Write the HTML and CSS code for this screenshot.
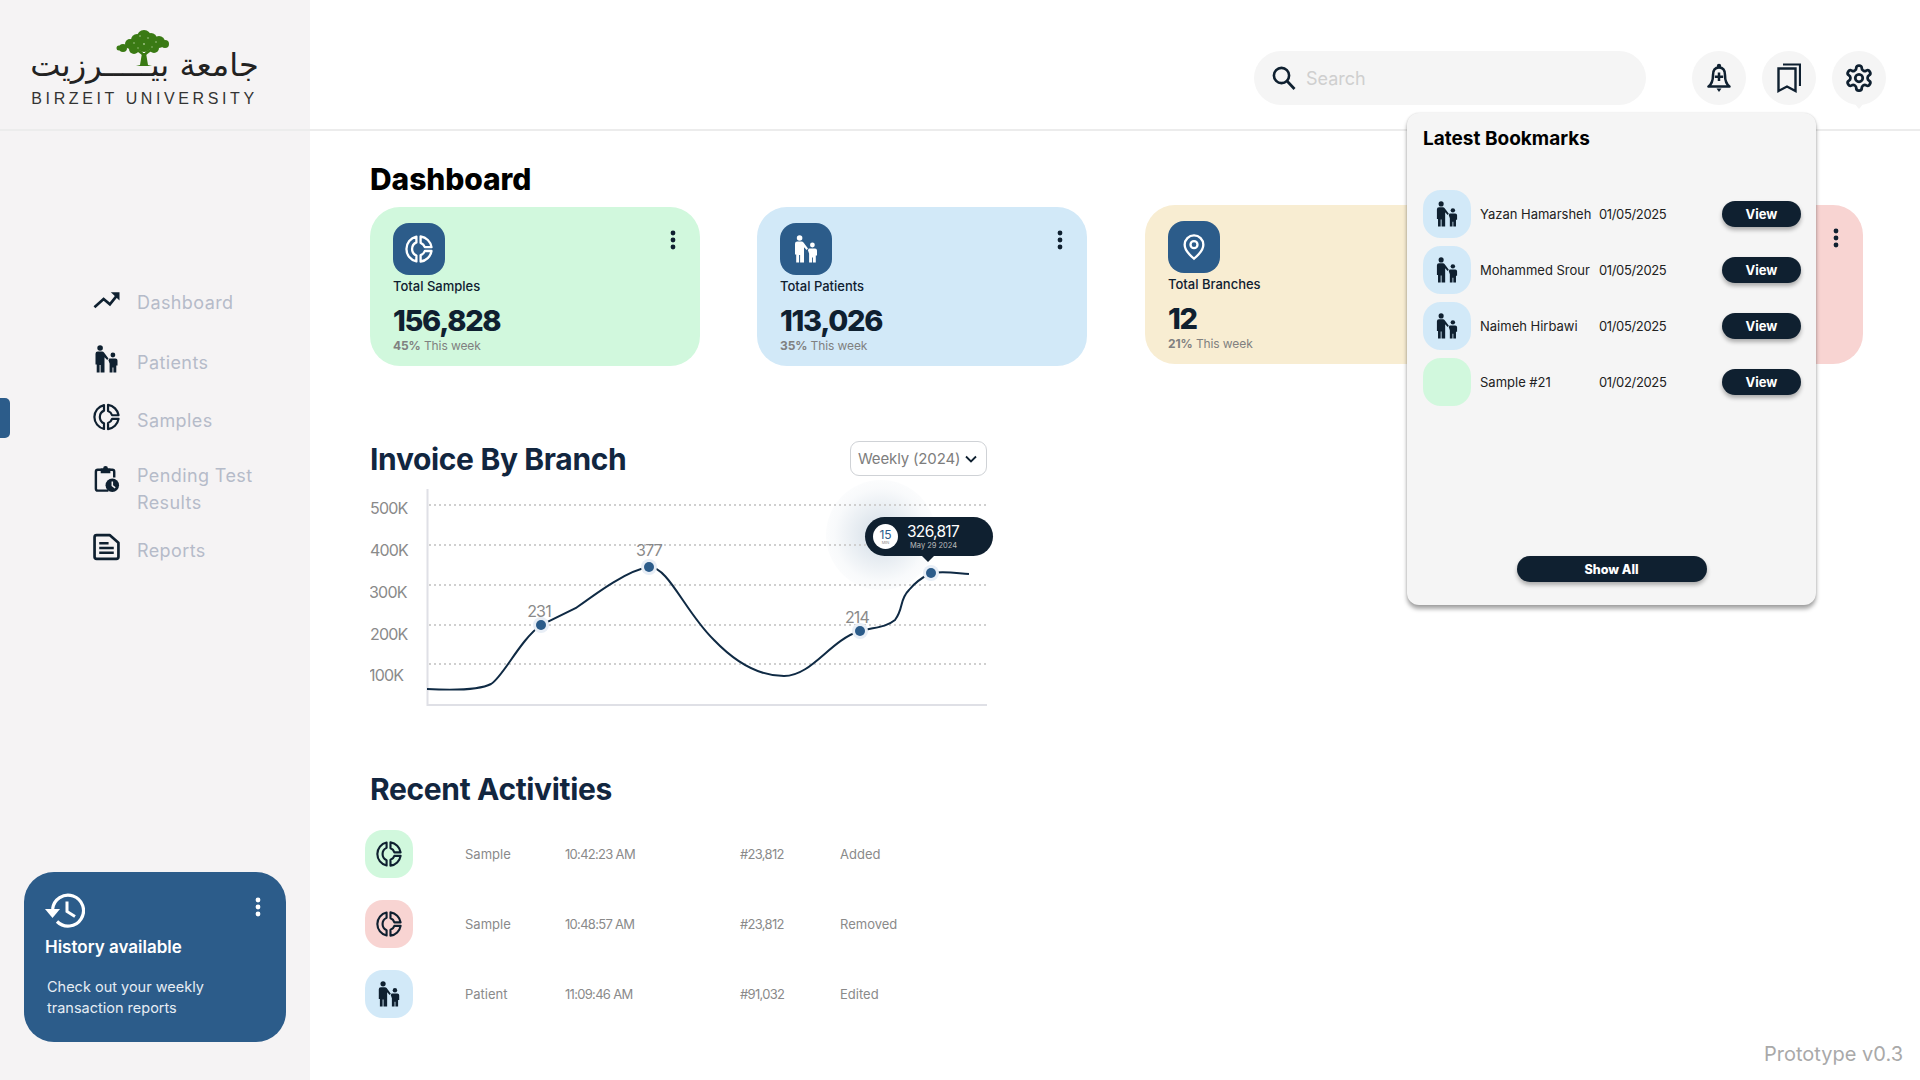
FILE: index.html
```html
<!DOCTYPE html>
<html lang="en">
<head>
<meta charset="utf-8">
<title>Birzeit University Dashboard</title>
<link rel="stylesheet" href="styles.css">
</head>
<body>
<svg class="sprite" aria-hidden="true">
  <symbol id="i-person" viewBox="0 0 24 28">
    <circle cx="5.6" cy="3" r="2.8" fill="currentColor"/>
    <circle cx="18.4" cy="10" r="2.4" fill="currentColor"/>
    <path fill="currentColor" d="M1 19.5V8.8Q1 6.6 3.2 6.6H7.6Q8.8 6.6 9.5 7.6L14 13.6L12.7 15L10 12.2V27.5H6.1V20H5.1V27.5H2.2V19.5Z"/>
    <path fill="currentColor" d="M14.8 13.4H21Q23 13.4 23 15.4V20.4H21.8V27.5H18.9V22.4H18V27.5H15.1V18.6L13.9 15.2Z"/>
  </symbol>
  <symbol id="i-sample" viewBox="0 0 28 28">
    <g fill="none" stroke="currentColor" stroke-width="2.3" stroke-linejoin="round">
      <path d="M11.4 1.6A12.7 12.7 0 0 0 11.4 26.4V20.6A7.2 7.2 0 0 1 11.4 7.4Z"/>
      <path d="M15.6 1.5A12.7 12.7 0 0 1 26.5 12.2H19.8Q18.8 9 15.6 7.8Z"/>
      <path d="M26.5 16A12.7 12.7 0 0 1 15.6 26.5V20.2Q18.8 19 19.8 16Z"/>
    </g>
  </symbol>
  <symbol id="i-dots" viewBox="0 0 6 20">
    <circle cx="3" cy="3" r="2.4" fill="currentColor"/><circle cx="3" cy="10" r="2.4" fill="currentColor"/><circle cx="3" cy="17" r="2.4" fill="currentColor"/>
  </symbol>
</svg>

<aside class="sidebar">
  <div class="logo">
    <svg class="tree" viewBox="0 0 56 38" aria-hidden="true">
      <g fill="#3a7a14">
        <path d="M24 36L26 24H30L32 36L36 37H20Z"/>
        <path d="M26 26L18 20L20 19L27 23ZM30 26L38 20L36 19L29 23Z"/>
        <circle cx="28" cy="8" r="7"/><circle cx="21" cy="11" r="6"/><circle cx="35" cy="10" r="6"/><circle cx="14" cy="15" r="5"/><circle cx="43" cy="13" r="6"/><circle cx="49" cy="15" r="4"/><circle cx="7" cy="19" r="4"/><circle cx="3" cy="19" r="2.5"/><circle cx="28" cy="16" r="7"/><circle cx="38" cy="19" r="5"/><circle cx="18" cy="20" r="5"/>
      </g>
      <g fill="#a9c98f"><circle cx="24" cy="7" r=".8"/><circle cx="32" cy="9" r=".8"/><circle cx="40" cy="13" r=".8"/><circle cx="18" cy="14" r=".8"/><circle cx="28" cy="15" r=".9"/><circle cx="36" cy="18" r=".7"/><circle cx="22" cy="19" r=".7"/></g>
    </svg>
    <div class="logo-ar" lang="ar" dir="rtl">جامعة بيـــــرزيت</div>
    <div class="logo-en">BIRZEIT UNIVERSITY</div>
  </div>

  <span class="nav-marker"></span>
  <nav class="nav">
    <a class="nav-item">
      <svg class="nav-ic" viewBox="0 0 28 18"><path d="M1.5 16.5L11 8L17.5 13.5L26 3" fill="none" stroke="currentColor" stroke-width="2.8"/><path d="M18.5 1H27.5V9.5Z" fill="currentColor"/></svg>
      <span>Dashboard</span>
    </a>
    <a class="nav-item">
      <svg class="nav-ic ic-tall"><use href="#i-person"/></svg>
      <span>Patients</span>
    </a>
    <a class="nav-item">
      <svg class="nav-ic ic-tall"><use href="#i-sample"/></svg>
      <span>Samples</span>
    </a>
    <a class="nav-item nav-two">
      <svg class="nav-ic ic-tall" viewBox="0 0 26 29">
        <path d="M15 26.5H4Q2 26.5 2 24.5V7Q2 5 4 5H19Q21 5 21 7V13" fill="none" stroke="currentColor" stroke-width="2.5"/>
        <path d="M7 3.5H9.5A2.5 2.5 0 0 1 14.5 3.5H17V8.5H7Z" fill="currentColor"/>
        <circle cx="19" cy="21" r="7" fill="currentColor"/>
        <path d="M19 17V21.4L22 23.6" fill="none" stroke="#f5f3f4" stroke-width="1.6"/>
      </svg>
      <span>Pending Test Results</span>
    </a>
    <a class="nav-item">
      <svg class="nav-ic ic-tall" viewBox="0 0 26 26">
        <path d="M3.5 1.5H16L24.5 9V22.5Q24.5 24.5 22.5 24.5H3.5Q1.5 24.5 1.5 22.5V3.5Q1.5 1.5 3.5 1.5Z" fill="none" stroke="currentColor" stroke-width="2.6" stroke-linejoin="round"/>
        <path d="M6 9.5H15M6 14H20M6 18.5H20" fill="none" stroke="currentColor" stroke-width="2.4"/>
      </svg>
      <span>Reports</span>
    </a>
  </nav>

  <section class="history">
    <div class="history-top">
      <svg class="history-ic" viewBox="0 0 40 35">
        <path d="M7.6 16A15.5 15.5 0 1 1 12 28.5" fill="none" stroke="currentColor" stroke-width="3.2"/>
        <path d="M0 16H15L7.5 25Z" fill="currentColor"/>
        <path d="M22 8.5V18.5L30 23.5" fill="none" stroke="currentColor" stroke-width="3"/>
      </svg>
      <svg class="dots dots-white"><use href="#i-dots"/></svg>
    </div>
    <h3 class="history-title">History available</h3>
    <p class="history-text">Check out your weekly transaction reports</p>
  </section>
</aside>

<main class="main">
  <header class="topbar">
    <div class="search">
      <svg class="search-ic" viewBox="0 0 24 24"><circle cx="9.5" cy="9.5" r="7.6" fill="none" stroke="currentColor" stroke-width="2.6"/><path d="M15 15L22.5 23" stroke="currentColor" stroke-width="2.8" fill="none"/></svg>
      <span class="search-text">Search</span>
    </div>
    <button class="round-btn">
      <svg class="btn-ic" viewBox="0 0 24 30">
        <path d="M12 4.5C7.5 4.5 6 8 6 12C6 17 5 21 1.5 23.5H22.5C19 21 18 17 18 12C18 8 16.5 4.5 12 4.5Z" fill="none" stroke="currentColor" stroke-width="2.5" stroke-linejoin="round"/>
        <path d="M12 9.5V18M7.8 13.8H16.2" stroke="currentColor" stroke-width="2.5" fill="none"/>
        <circle cx="12" cy="3" r="2.2" fill="currentColor"/>
        <path d="M9.5 25.5H14.5L12 29Z" fill="currentColor"/>
      </svg>
    </button>
    <button class="round-btn">
      <svg class="btn-ic" viewBox="0 0 24 30">
        <path d="M1.5 5.5H18.5V28L10 23.5L1.5 28Z" fill="none" stroke="currentColor" stroke-width="2.4"/>
        <path d="M6 1.5H23V23" fill="none" stroke="currentColor" stroke-width="2.2"/>
      </svg>
    </button>
    <button class="round-btn round-active">
      <svg class="btn-ic gear" viewBox="0 0 24 24" fill="none" stroke="currentColor" stroke-width="2.2">
        <path d="M12.22 2h-.44a2 2 0 0 0-2 2v.18a2 2 0 0 1-1 1.73l-.43.25a2 2 0 0 1-2 0l-.15-.08a2 2 0 0 0-2.73.73l-.22.38a2 2 0 0 0 .73 2.73l.15.1a2 2 0 0 1 1 1.72v.51a2 2 0 0 1-1 1.74l-.15.09a2 2 0 0 0-.73 2.73l.22.38a2 2 0 0 0 2.73.73l.15-.08a2 2 0 0 1 2 0l.43.25a2 2 0 0 1 1 1.73V20a2 2 0 0 0 2 2h.44a2 2 0 0 0 2-2v-.18a2 2 0 0 1 1-1.73l.43-.25a2 2 0 0 1 2 0l.15.08a2 2 0 0 0 2.73-.73l.22-.39a2 2 0 0 0-.73-2.73l-.15-.08a2 2 0 0 1-1-1.74v-.5a2 2 0 0 1 1-1.74l.15-.09a2 2 0 0 0 .73-2.73l-.22-.38a2 2 0 0 0-2.73-.73l-.15.08a2 2 0 0 1-2 0l-.43-.25a2 2 0 0 1-1-1.73V4a2 2 0 0 0-2-2z"/>
        <circle cx="12" cy="12" r="3"/>
      </svg>
    </button>
  </header>

  <div class="content">
    <h1 class="page-title">Dashboard</h1>
    <div class="cards">
      <article class="card c-green">
        <div class="card-top"><div class="tile"><svg class="tile-ic"><use href="#i-sample"/></svg></div><svg class="dots"><use href="#i-dots"/></svg></div>
        <div class="card-label">Total Samples</div>
        <div class="card-num">156,828</div>
        <div class="card-week"><b>45%</b> This week</div>
      </article>
      <article class="card c-blue">
        <div class="card-top"><div class="tile"><svg class="tile-ic"><use href="#i-person"/></svg></div><svg class="dots"><use href="#i-dots"/></svg></div>
        <div class="card-label">Total Patients</div>
        <div class="card-num">113,026</div>
        <div class="card-week"><b>35%</b> This week</div>
      </article>
      <article class="card c-yellow raised">
        <div class="card-top"><div class="tile"><svg class="tile-ic" viewBox="0 0 24 24" fill="none" stroke="currentColor" stroke-width="2"><path d="M20 10c0 6-8 12-8 12s-8-6-8-12a8 8 0 0 1 16 0Z"/><circle cx="12" cy="10" r="3"/></svg></div><svg class="dots"><use href="#i-dots"/></svg></div>
        <div class="card-label">Total Branches</div>
        <div class="card-num">12</div>
        <div class="card-week"><b>21%</b> This week</div>
      </article>
      <article class="card c-red raised">
        <div class="card-top"><div class="tile"></div><svg class="dots"><use href="#i-dots"/></svg></div>
      </article>
    </div>

    <div class="chart-head">
      <h2 class="section-title">Invoice By Branch</h2>
      <div class="select"><span>Weekly (2024)</span><svg class="chev" viewBox="0 0 12 8"><path d="M1 1.5L6 6.5L11 1.5" fill="none" stroke="currentColor" stroke-width="1.8"/></svg></div>
    </div>

    <div class="chart">
      <div class="glow"></div>
      <svg class="chart-svg" viewBox="370 482 650 240">
        <g class="grid">
          <line x1="429" x2="987" y1="505" y2="505"/><line x1="429" x2="987" y1="545" y2="545"/><line x1="429" x2="987" y1="585" y2="585"/><line x1="429" x2="987" y1="625" y2="625"/><line x1="429" x2="987" y1="664" y2="664"/>
        </g>
        <path class="axis" d="M427.5 489V705H987"/>
        <g class="y-labels">
          <text x="370" y="514">500K</text><text x="370" y="556">400K</text><text x="369" y="598">300K</text><text x="370" y="640">200K</text><text x="369" y="681">100K</text>
        </g>
        <path class="curve" d="M427 689C447 690 478 691 491 684C503 677 520 640 541 625L576 608C598 592 628 570 649 567C668 566 685 612 714 640C738 665 762 676 784 676C812 676 830 640 860 631C875 627 885 628 895 620C904 608 899 600 909 590C917 580 925 576 931 573C945 571 955 573 969 574"/>
        <g class="halo"><circle cx="541" cy="625" r="8"/><circle cx="649" cy="567" r="8"/><circle cx="860" cy="631" r="8"/><circle cx="931" cy="573" r="8"/></g>
        <g class="pt"><circle cx="541" cy="625" r="5"/><circle cx="649" cy="567" r="5"/><circle cx="860" cy="631" r="5"/><circle cx="931" cy="573" r="5"/></g>
        <g class="pt-labels"><text x="539" y="617">231</text><text x="649" y="556">377</text><text x="857" y="623">214</text></g>
      </svg>
      <div class="tooltip">
        <div class="tip-badge"><span class="tip-15">15</span><span class="tip-min">MIN</span></div>
        <div class="tip-body"><div class="tip-val">326,817</div><div class="tip-date">May 29 2024</div></div>
      </div>
    </div>

    <h2 class="section-title recent-title">Recent Activities</h2>
    <div class="activities">
      <div class="act"><div class="act-tile c-green"><svg class="act-ic"><use href="#i-sample"/></svg></div><span class="a1">Sample</span><span class="num">10:42:23 AM</span><span class="num">#23,812</span><span>Added</span></div>
      <div class="act"><div class="act-tile c-red"><svg class="act-ic"><use href="#i-sample"/></svg></div><span class="a1">Sample</span><span class="num">10:48:57 AM</span><span class="num">#23,812</span><span>Removed</span></div>
      <div class="act"><div class="act-tile c-blue"><svg class="act-ic"><use href="#i-person"/></svg></div><span class="a1">Patient</span><span class="num">11:09:46 AM</span><span class="num">#91,032</span><span>Edited</span></div>
    </div>
  </div>

  <section class="bookmarks">
    <h3 class="bm-title">Latest Bookmarks</h3>
    <div class="bm-list">
      <div class="bm"><div class="act-tile c-blue"><svg class="bm-ic"><use href="#i-person"/></svg></div><span>Yazan Hamarsheh</span><span class="bm-date">01/05/2025</span><button class="view">View</button></div>
      <div class="bm"><div class="act-tile c-blue"><svg class="bm-ic"><use href="#i-person"/></svg></div><span>Mohammed Srour</span><span class="bm-date">01/05/2025</span><button class="view">View</button></div>
      <div class="bm"><div class="act-tile c-blue"><svg class="bm-ic"><use href="#i-person"/></svg></div><span>Naimeh Hirbawi</span><span class="bm-date">01/05/2025</span><button class="view">View</button></div>
      <div class="bm"><div class="act-tile c-green"></div><span>Sample #21</span><span class="bm-date">01/02/2025</span><button class="view">View</button></div>
    </div>
    <button class="show-all">Show All</button>
  </section>

  <div class="proto">Prototype v0.3</div>
</main>
</body>
</html>
```

FILE: styles.css
```css
*{box-sizing:border-box}
html,body{margin:0;padding:0}
body{width:1920px;height:1080px;overflow:hidden;display:flex;background:#fff;font-family:Inter,"Noto Sans",sans-serif;color:#0f2030}
h1,h2,h3,p{margin:0}
button{font-family:inherit;border:0;padding:0}
.sprite{position:absolute;width:0;height:0}

.sidebar{width:310px;height:1080px;background:#f5f3f4;display:flex;flex-direction:column;position:relative;flex:none}
.logo{height:131px;border-bottom:2px solid #ececec;padding:43px 21px 0 0;position:relative;display:flex;flex-direction:column;align-items:center}
.tree{position:absolute;left:116px;top:29px;width:56px;height:38px}
.logo-ar{font-family:"DejaVu Sans",sans-serif;font-size:32px;line-height:44px;height:44px;color:#222;white-space:nowrap}
.logo-en{font-family:"Liberation Sans",sans-serif;font-size:16px;line-height:18px;letter-spacing:3.6px;color:#333;margin-top:3px;white-space:nowrap}

.nav-marker{position:absolute;left:0;top:398px;width:10px;height:40px;background:#2c5c8a;border-radius:0 5px 5px 0}
.nav{margin-top:142px;display:grid;grid-template-rows:59px 60px 56px 81px 42px}
.nav-item{display:flex;align-items:center;color:#b5bbc9;font-size:18px;line-height:27px;padding-left:93px}
.nav-item span{display:block;width:130px;margin-left:17px;letter-spacing:.4px}
.nav-ic{width:27px;height:18px;color:#0f2030;flex:none;margin-top:-6px}
.ic-tall{height:28px;margin-top:-6px}
.nav-two .nav-ic{margin-top:-20px}

.history{margin:auto 24px 38px;height:170px;width:262px;background:#2c5c8a;border-radius:30px;color:#fff;padding:21px 21px 0}
.history-top{display:flex;justify-content:space-between;align-items:flex-start;height:35px}
.history-ic{width:40px;height:35px;color:#fff}
.dots{width:6px;height:20px;flex:none;color:#0f2030}
.dots-white{color:#fff;margin:4px 4px 0 0}
.history-title{font-size:17px;line-height:24px;font-weight:600;margin-top:7px}
.history-text{font-size:14.5px;line-height:21px;margin:17px 0 0 2px;width:190px;color:#e6edf4}

.main{flex:1;position:relative;min-width:0}
.topbar{height:131px;border-bottom:2px solid #ececec;padding:51px 34px 0 0;display:flex;justify-content:flex-end;align-items:flex-start;gap:16px}
.search{width:392px;height:54px;border-radius:27px;background:#f5f5f5;display:flex;align-items:center;padding-left:18px;margin-right:30px}
.search-ic{width:24px;height:24px;color:#0f2030;flex:none}
.search-text{margin-left:10px;font-size:18px;color:#cfcfcf}
.round-btn{width:54px;height:54px;border-radius:50%;background:#f5f5f5;display:flex;align-items:center;justify-content:center;position:relative;color:#0f2030}
.btn-ic{width:24px;height:30px}
.gear{width:30px;height:30px}
.round-active::after{content:"";position:absolute;left:22px;top:52px;border:5px solid transparent;border-top:6px solid #f5f5f5}

.content{padding:26px 0 0 60px}
.page-title{font-size:30px;line-height:45px;font-weight:800;color:#000;letter-spacing:-.1px}
.cards{display:flex;gap:57px;margin-top:5px}
.card{width:330px;height:159px;flex:none;border-radius:30px;padding:16px 23px 0}
.raised{margin:-2px 0 0 1px}
.c-green{background:#d1f8dd}
.c-blue{background:#d2e9f8}
.c-yellow{background:#f8edd2}
.c-red{background:#f8d4d2}
.card-top{display:flex;justify-content:space-between;align-items:flex-start}
.card-top .dots{margin:7px 1px 0 0}
.tile{width:52px;height:52px;border-radius:16px;background:#2c5c8a;display:flex;align-items:center;justify-content:center;color:#fff}
.tile-ic{width:28px;height:28px}
.card-label{font-size:13px;line-height:18px;font-weight:500;margin-top:2px;color:#0f2030}
.card-num{font-size:29px;line-height:36px;font-weight:800;margin-top:8px;color:#0f2030;letter-spacing:-1.3px}
.card-week{font-size:12px;line-height:16px;margin-top:-1px;color:#808080;letter-spacing:-.1px}
.card-week b{font-weight:700}

.chart-head{width:617px;display:flex;justify-content:space-between;align-items:center;margin-top:71px}
.section-title{font-size:30px;line-height:45px;font-weight:700;color:#12263f;white-space:nowrap;letter-spacing:-.35px}
.select{width:137px;height:35px;margin-top:-2px;border:1px solid #cfd2d6;border-radius:9px;display:flex;align-items:center;justify-content:space-between;padding:0 9px 0 7px;font-size:15px;letter-spacing:-.15px;color:#7d7d7d;white-space:nowrap}
.chev{width:12px;height:8px;color:#0f2030;flex:none}

.chart{position:relative;width:650px;height:240px}
.chart-svg{display:block;width:650px;height:240px;position:relative}
.grid line{stroke:#cfcfcf;stroke-width:1.8;stroke-dasharray:2 3}
.axis{fill:none;stroke:#dfe0e6;stroke-width:2}
.y-labels text,.pt-labels text{font-family:Inter,sans-serif;font-size:16px;fill:#8a8a8a;letter-spacing:-.8px}
.pt-labels text{text-anchor:middle}
.curve{fill:none;stroke:#0f2a44;stroke-width:2}
.halo circle{fill:#e8eef6}
.pt circle{fill:#2c5c8a}
.glow{position:absolute;left:456px;top:-2px;width:110px;height:110px;border-radius:50%;background:radial-gradient(circle,rgba(44,92,138,.22) 0,rgba(44,92,138,.12) 30%,rgba(44,92,138,.03) 60%,rgba(44,92,138,0) 85%)}
.tooltip{position:absolute;left:495px;top:35px;width:128px;height:39px;border-radius:20px;background:#0f2030;display:flex;align-items:center;padding-left:8px;color:#fff}
.tooltip::after{content:"";position:absolute;left:57px;top:39px;border:6px solid transparent;border-top:6px solid #0f2030;border-bottom:0}
.tip-badge{width:25px;height:25px;border-radius:50%;background:#fff;display:flex;flex-direction:column;align-items:center;justify-content:center;flex:none}
.tip-15{font-size:12px;line-height:11px;color:#2c5c8a}
.tip-min{font-size:4px;line-height:5px;color:#888}
.tip-body{margin-left:9px}
.tip-val{font-size:15.5px;line-height:18px;letter-spacing:-.7px}
.tip-date{font-size:7.5px;line-height:9px;color:#bbb;margin-left:3px}

.recent-title{font-weight:700;margin-top:45px}
.activities{margin:18px 0 0 -5px;display:flex;flex-direction:column;gap:22px}
.act{display:grid;grid-template-columns:100px 100px 175px 100px 120px;align-items:center;font-size:13px;color:#8a8a8a}
.num{letter-spacing:-.7px}
.act-tile{width:48px;height:48px;border-radius:18px;display:flex;align-items:center;justify-content:center;color:#0f2030}
.act-ic{width:26px;height:26px}
.bm-ic{width:22px;height:26px}

.bookmarks{position:absolute;left:1097px;top:113px;width:409px;height:492px;background:#f5f5f5;border-radius:12px;box-shadow:0 4px 4px rgba(0,0,0,.35),0 0 2px rgba(0,0,0,.15);padding:0 16px;display:flex;flex-direction:column}
.bm-title{font-size:19px;line-height:28px;font-weight:700;color:#000;margin-top:12px}
.bm-list{margin-top:37px;display:flex;flex-direction:column;gap:8px}
.bm{display:grid;grid-template-columns:57px 119px 123px 79px;align-items:center;font-size:13px;color:#222}
.bm-date{letter-spacing:-.35px}
.view{width:79px;height:26px;border-radius:13px;background:#0f2030;color:#fff;font-size:13px;font-weight:700;box-shadow:0 3px 4px rgba(0,0,0,.3)}
.show-all{align-self:center;margin-top:auto;margin-bottom:23px;width:190px;height:26px;border-radius:13px;background:#0f2030;color:#fff;font-size:12.5px;font-weight:800;box-shadow:0 3px 4px rgba(0,0,0,.3)}
.proto{position:absolute;right:17px;bottom:13px;font-size:20px;line-height:26px;color:#a9a9a9}
```
